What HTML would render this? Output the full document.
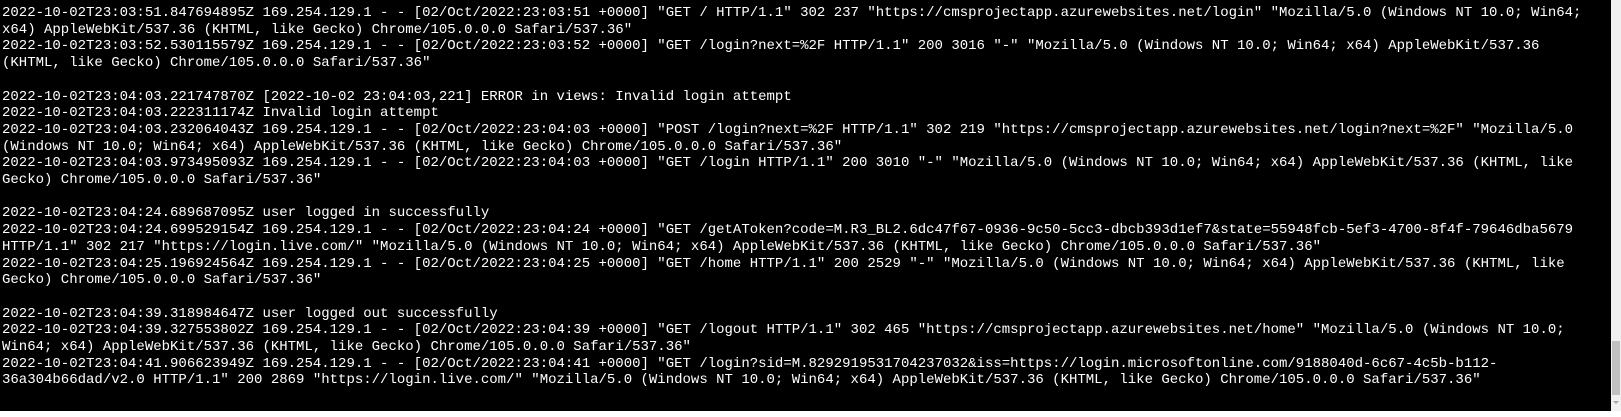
<!DOCTYPE html>
<html><head><meta charset="utf-8"><style>
html,body{margin:0;padding:0;width:1621px;height:417px;overflow:hidden;background:#fff}
#term{position:absolute;left:0;top:0;width:1611px;height:411px;background:#000;overflow:hidden}
#log{position:absolute;left:2px;top:5px;font-family:"Liberation Mono",monospace;font-size:14px;color:#fff;white-space:pre;line-height:16.7px}
.e{min-height:16.7px}
#sb{position:absolute;left:1611px;top:0;width:10px;height:411px;background:#f0f0f0}
#th{position:absolute;left:1612px;top:341px;width:8px;height:54px;background:#c1c1c1}
#ar{position:absolute;left:1613px;top:401px;width:0;height:0;border-left:3px solid transparent;border-right:3px solid transparent;border-top:3px solid #a3a3a3}
</style></head><body>
<div id="term"><div id="log"><div class="e">2022-10-02T23:03:51.847694895Z 169.254.129.1 - - [02/Oct/2022:23:03:51 +0000] "GET / HTTP/1.1" 302 237 "https://cmsprojectapp.azurewebsites.net/login" "Mozilla/5.0 (Windows NT 10.0; Win64;
x64) AppleWebKit/537.36 (KHTML, like Gecko) Chrome/105.0.0.0 Safari/537.36"</div><div class="e">2022-10-02T23:03:52.530115579Z 169.254.129.1 - - [02/Oct/2022:23:03:52 +0000] "GET /login?next=%2F HTTP/1.1" 200 3016 "-" "Mozilla/5.0 (Windows NT 10.0; Win64; x64) AppleWebKit/537.36
(KHTML, like Gecko) Chrome/105.0.0.0 Safari/537.36"</div><div class="e"> </div><div class="e">2022-10-02T23:04:03.221747870Z [2022-10-02 23:04:03,221] ERROR in views: Invalid login attempt</div><div class="e">2022-10-02T23:04:03.222311174Z Invalid login attempt</div><div class="e">2022-10-02T23:04:03.232064043Z 169.254.129.1 - - [02/Oct/2022:23:04:03 +0000] "POST /login?next=%2F HTTP/1.1" 302 219 "https://cmsprojectapp.azurewebsites.net/login?next=%2F" "Mozilla/5.0
(Windows NT 10.0; Win64; x64) AppleWebKit/537.36 (KHTML, like Gecko) Chrome/105.0.0.0 Safari/537.36"</div><div class="e">2022-10-02T23:04:03.973495093Z 169.254.129.1 - - [02/Oct/2022:23:04:03 +0000] "GET /login HTTP/1.1" 200 3010 "-" "Mozilla/5.0 (Windows NT 10.0; Win64; x64) AppleWebKit/537.36 (KHTML, like
Gecko) Chrome/105.0.0.0 Safari/537.36"</div><div class="e"> </div><div class="e">2022-10-02T23:04:24.689687095Z user logged in successfully</div><div class="e">2022-10-02T23:04:24.699529154Z 169.254.129.1 - - [02/Oct/2022:23:04:24 +0000] "GET /getAToken?code=M.R3_BL2.6dc47f67-0936-9c50-5cc3-dbcb393d1ef7&amp;state=55948fcb-5ef3-4700-8f4f-79646dba5679
HTTP/1.1" 302 217 "https://login.live.com/" "Mozilla/5.0 (Windows NT 10.0; Win64; x64) AppleWebKit/537.36 (KHTML, like Gecko) Chrome/105.0.0.0 Safari/537.36"</div><div class="e">2022-10-02T23:04:25.196924564Z 169.254.129.1 - - [02/Oct/2022:23:04:25 +0000] "GET /home HTTP/1.1" 200 2529 "-" "Mozilla/5.0 (Windows NT 10.0; Win64; x64) AppleWebKit/537.36 (KHTML, like
Gecko) Chrome/105.0.0.0 Safari/537.36"</div><div class="e"> </div><div class="e">2022-10-02T23:04:39.318984647Z user logged out successfully</div><div class="e">2022-10-02T23:04:39.327553802Z 169.254.129.1 - - [02/Oct/2022:23:04:39 +0000] "GET /logout HTTP/1.1" 302 465 "https://cmsprojectapp.azurewebsites.net/home" "Mozilla/5.0 (Windows NT 10.0;
Win64; x64) AppleWebKit/537.36 (KHTML, like Gecko) Chrome/105.0.0.0 Safari/537.36"</div><div class="e">2022-10-02T23:04:41.906623949Z 169.254.129.1 - - [02/Oct/2022:23:04:41 +0000] "GET /login?sid=M.8292919531704237032&amp;iss=https://login.microsoftonline.com/9188040d-6c67-4c5b-b112-
36a304b66dad/v2.0 HTTP/1.1" 200 2869 "https://login.live.com/" "Mozilla/5.0 (Windows NT 10.0; Win64; x64) AppleWebKit/537.36 (KHTML, like Gecko) Chrome/105.0.0.0 Safari/537.36"</div></div></div>
<div id="sb"></div><div id="th"></div><div id="ar"></div>
</body></html>
